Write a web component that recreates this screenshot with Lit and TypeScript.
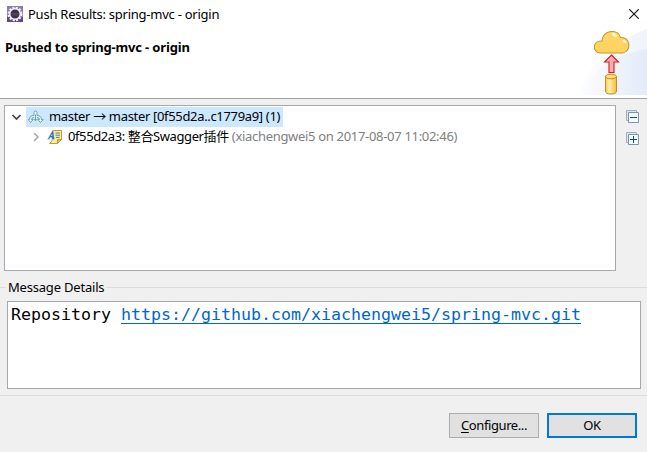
import { LitElement, html, css, svg } from "lit";
import { customElement } from "lit/decorators.js";

const eclipseIcon = svg`<svg class="app-icon" width="16" height="16" viewBox="0 0 16 16">
  <rect width="16" height="16" fill="#8a7cab"/><path d="M0 11h16v5H0z" fill="#5d4b86"/>
  <circle cx="8" cy="8" r="6.4" fill="none" stroke="#f4f2f7" stroke-width="2" stroke-dasharray="2 1.35"/>
  <circle cx="8" cy="8" r="5.3" fill="#3b3048" stroke="#f4f2f7" stroke-width="1.5"/>
  <path d="M4.200 7.500h7.600M4.200 9h7.600" stroke="#62566f" stroke-width=".7"/></svg>`;

const pushBanner = svg`<svg class="banner" width="100" height="68" viewBox="547 28 100 68">
  <defs>
    <linearGradient id="sweep" x1="0" x2="1"><stop offset="0" stop-color="#fff"/><stop offset="1" stop-color="#dfe8f7"/></linearGradient>
    <linearGradient id="cloud" x1="0" y1="0" x2="0" y2="1"><stop offset="0" stop-color="#ffd56a"/><stop offset="1" stop-color="#ffd35e"/></linearGradient>
    <linearGradient id="can" x1="0" x2="1"><stop offset="0" stop-color="#f8c94e"/><stop offset=".35" stop-color="#ffeca8"/><stop offset="1" stop-color="#f3bd3d"/></linearGradient>
  </defs>
  <path d="M575 95Q600 46 647 29V95z" fill="url(#sweep)" opacity=".5"/>
  <path d="M575 95Q602 56 647 49V95z" fill="url(#sweep)" opacity=".75"/>
  <path d="M600.500 53C592 52.500 592 40.500 602 41C602 29.500 619 28.500 620.500 37.500C631 36.500 631.500 52 622.500 53z" fill="url(#cloud)" stroke="#c99a22" stroke-width="1.1"/>
  <ellipse cx="614.500" cy="35" rx="3" ry="1.700" fill="#fff1c7" transform="rotate(30 614.500 35)"/>
  <ellipse cx="624.500" cy="41.500" rx="2.200" ry="1.500" fill="#fff1c7" transform="rotate(30 624.500 41.500)"/>
  <path d="M611.500 55L618.500 62H614V72.500H609V62H604.500z" fill="#f3aeb0" stroke="#d7191f" stroke-width="1.100"/>
  <path d="M605.500 76.500V91Q605.500 94 611 94T616.500 91V76.500z" fill="url(#can)" stroke="#c58c1a"/>
  <ellipse cx="611" cy="76.500" rx="5.500" ry="2.300" fill="#ffdc7c" stroke="#c58c1a"/>
</svg>`;

const branchIcon = svg`<svg class="branch" width="16" height="16" viewBox="0 0 16 16" fill="#e6f6f2" stroke="#6a9c9a" stroke-width=".9">
  <path d="M6 6.500V3.500Q6 2 7.500 2T9 3.500V6.500Q13.500 6.500 13.500 10.500H15.300L12.500 13.500L9.700 10.500H11.500Q11.500 8.500 9 8.500M6 8.500Q3.500 8.500 3.500 10.500H5.300L2.500 13.500L.2 10.500H1.500Q1.500 6.500 6 6.500" stroke-linejoin="round"/>
  <path d="M7.500 5.500V11.500M5.800 10L7.500 11.800L9.200 10" fill="none"/></svg>`;

const commitIcon = svg`<svg class="commit" width="16" height="16" viewBox="0 0 16 16">
  <path d="M5.500 1.500H14.500V10.500L10.500 14.500H2.500Q5 13 5.500 10z" fill="#ffec98" stroke="#c69a35"/>
  <path d="M14.500 10.500H10.500V14.500z" fill="#e7b542" stroke="#c69a35"/>
  <path d="M8.500 4H13M8.500 6.200H13M9 8.400H12.500" stroke="#527da8"/>
  <path d="M.5 10.500L5.200 2H6.500L7.500 10.500H4.800V8.500H3.200L2.200 10.500z" fill="#2b6cad" stroke="#c8def2" stroke-width=".5"/>
  <path d="M4 7L5.300 4.500V7z" fill="#dcecf8"/></svg>`;

const close = svg`<svg class="close" width="10" height="10" viewBox="0 0 10 10"><path d="M.3.3L9.700 9.700M9.700.3L.3 9.700" stroke="#111" stroke-width="1.100"/></svg>`;

const toggleIcon = (plus: boolean) => svg`<svg width="14" height="14" viewBox="0 0 14 14">
  <path d="M.5.500H10.500V10.500H.5z" fill="#d9e5f0" stroke="#9dafc5"/>
  <path d="M2.500 2.500H12.500V12.500H2.500z" fill="#f2fbff" stroke="#7f93b0"/>
  <path d="M4 7.500H11" stroke="#0c4a80"/>${plus ? svg`<path d="M7.500 4V11" stroke="#0c4a80"/>` : ""}</svg>`;

@customElement("app-root")
export class AppRoot extends LitElement {
  static styles = css`
    :host { display: flex; flex-direction: column; width: 647px; height: 452px; box-sizing: border-box;
      background: #f0f0f0; color: #000; overflow: hidden;
      font: 13px/18px "Noto Sans", "Noto Sans CJK SC", sans-serif; white-space: nowrap; }
    * { box-sizing: border-box; }
    svg { display: block; flex: none; }
    .header { position: relative; height: 99px; flex: none; background: #fff; border-bottom: 1px solid #a0a0a0; }
    .banner { position: absolute; right: 0; top: 28px; }
    .titlebar { display: flex; align-items: center; height: 27px; padding: 0 8px 0 7px; }
    .title { margin-left: 5px; flex: 1; letter-spacing: -.25px; }
    .heading { font-weight: 700; padding: 11px 0 0 5px; letter-spacing: -.16px; }
    .content { display: flex; height: 166px; margin-top: 6px; padding-left: 4px; flex: none; }
    .tree { width: 612px; border: 1px solid #a5a8ae; background: #fff; padding-top: 1px; }
    .row { display: flex; align-items: center; height: 20px; }
    .arrow { margin-left: 6px; }
    .selected { display: flex; align-items: center; height: 20px; background: #cce8ff; width: 257px; margin-left: 4px; padding-left: 2px; }
    .label { margin: 0 0 2px 5px; letter-spacing: -.33px; }
    .hash { letter-spacing: -.4px; }
    .child { padding-left: 19px; }
    .child svg { margin-bottom: 1px; }
    .commit { margin-left: 6px; }
    .meta { color: #808080; letter-spacing: -.31px; }
    .tools { display: flex; flex-direction: column; gap: 8px; padding: 5px 0 0 10px; }
    .legend { display: flex; align-items: center; height: 20px; margin-top: 6px; flex: none; letter-spacing: -.2px; }
    .legend::before, .legend::after { content: ""; height: 1px; background: #dcdcdc; width: 6px; }
    .legend::after { flex: 1; }
    .legend span { padding: 0 2px; }
    .message { height: 88px; margin: 4px 6px 0 7px; border: 1px solid #a5a8ae; background: #fff; padding: 1px 3px; flex: none;
      font: 16.610px/24px "DejaVu Sans Mono", monospace; }
    a { color: #0066cc; text-decoration: underline; text-underline-offset: 3px; text-decoration-thickness: 1px; text-decoration-skip-ink: none; }
    .footer { display: flex; justify-content: flex-end; gap: 8px; margin-top: 6px; padding: 17px 10px 0; border-top: 1px solid #dcdcdc; }
    button { width: 90px; height: 25px; padding: 0 0 1px; border: 1px solid #adadad; background: #e1e1e1; font: inherit; color: inherit; letter-spacing: -.4px; }
    .default { border: 2px solid #0078d7; }
    u { text-underline-offset: 2px; }
  `;
  render() {
    return html`
      <div class="header">
        ${pushBanner}
        <div class="titlebar">${eclipseIcon}<span class="title">Push Results: spring-mvc - origin</span>${close}</div>
        <div class="heading">Pushed to spring-mvc - origin</div>
      </div>
      <div class="content">
        <div class="tree">
          <div class="row">
            <svg class="arrow" width="11" height="8" viewBox="0 0 11 8"><path d="M1.500 2L5.500 6L9.500 2" fill="none" stroke="#404040" stroke-width="1.700"/></svg>
            <div class="selected">${branchIcon}<span class="label">master → master [0f55d2a..c1779a9] (1)</span></div>
          </div>
          <div class="row child">
            <svg class="arrow" width="11" height="10" viewBox="0 0 11 10"><path d="M4 1L8 5L4 9" fill="none" stroke="#a6a6a6" stroke-width="1.500"/></svg>
            ${commitIcon}<span class="label"><span class="hash">0f55d2a3: 整合Swagger插件</span><span class="meta"> (xiachengwei5 on 2017-08-07 11:02:46)</span></span>
          </div>
        </div>
        <div class="tools">${toggleIcon(false)}${toggleIcon(true)}</div>
      </div>
      <div class="legend"><span>Message Details</span></div>
      <div class="message">Repository <a>https://github.com/xiachengwei5/spring-mvc.git</a></div>
      <div class="footer"><button><u>C</u>onfigure...</button><button class="default">OK</button></div>`;
  }
}
